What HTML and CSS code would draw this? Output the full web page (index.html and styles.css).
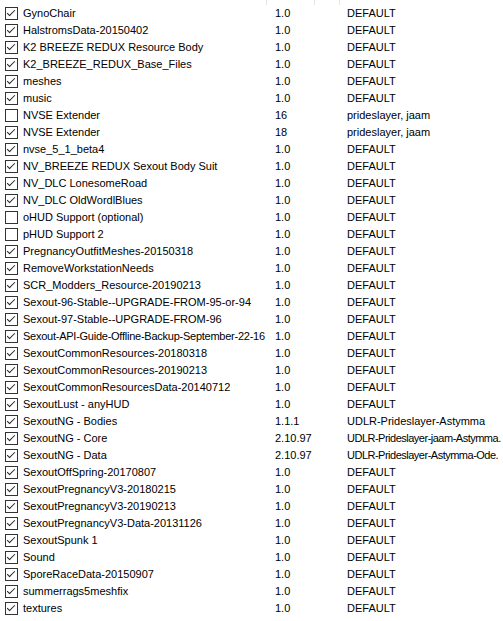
FILE: index.html
```html
<!DOCTYPE html>
<html lang="en">
<head>
    <meta charset="UTF-8">
    <title>Mod list</title>
    <link rel="stylesheet" href="styles.css">
</head>
<body>
    <div class="list">
        <div class="head"><span></span><span></span><span></span></div>
        <div class="row"><span class="name"><i class="chk on"></i>GynoChair</span><span class="ver">1.0</span><span class="auth">DEFAULT</span></div>
        <div class="row"><span class="name"><i class="chk on"></i>HalstromsData-20150402</span><span class="ver">1.0</span><span class="auth">DEFAULT</span></div>
        <div class="row"><span class="name"><i class="chk on"></i>K2 BREEZE REDUX Resource Body</span><span class="ver">1.0</span><span class="auth">DEFAULT</span></div>
        <div class="row"><span class="name"><i class="chk on"></i>K2_BREEZE_REDUX_Base_Files</span><span class="ver">1.0</span><span class="auth">DEFAULT</span></div>
        <div class="row"><span class="name"><i class="chk on"></i>meshes</span><span class="ver">1.0</span><span class="auth">DEFAULT</span></div>
        <div class="row"><span class="name"><i class="chk on"></i>music</span><span class="ver">1.0</span><span class="auth">DEFAULT</span></div>
        <div class="row"><span class="name"><i class="chk"></i>NVSE Extender</span><span class="ver">16</span><span class="auth">prideslayer, jaam</span></div>
        <div class="row"><span class="name"><i class="chk on"></i>NVSE Extender</span><span class="ver">18</span><span class="auth">prideslayer, jaam</span></div>
        <div class="row"><span class="name"><i class="chk on"></i>nvse_5_1_beta4</span><span class="ver">1.0</span><span class="auth">DEFAULT</span></div>
        <div class="row"><span class="name"><i class="chk on"></i>NV_BREEZE REDUX Sexout Body Suit</span><span class="ver">1.0</span><span class="auth">DEFAULT</span></div>
        <div class="row"><span class="name"><i class="chk on"></i>NV_DLC LonesomeRoad</span><span class="ver">1.0</span><span class="auth">DEFAULT</span></div>
        <div class="row"><span class="name"><i class="chk on"></i>NV_DLC OldWordlBlues</span><span class="ver">1.0</span><span class="auth">DEFAULT</span></div>
        <div class="row"><span class="name"><i class="chk"></i>oHUD Support (optional)</span><span class="ver">1.0</span><span class="auth">DEFAULT</span></div>
        <div class="row"><span class="name"><i class="chk"></i>pHUD Support 2</span><span class="ver">1.0</span><span class="auth">DEFAULT</span></div>
        <div class="row"><span class="name"><i class="chk on"></i>PregnancyOutfitMeshes-20150318</span><span class="ver">1.0</span><span class="auth">DEFAULT</span></div>
        <div class="row"><span class="name"><i class="chk on"></i>RemoveWorkstationNeeds</span><span class="ver">1.0</span><span class="auth">DEFAULT</span></div>
        <div class="row"><span class="name"><i class="chk on"></i>SCR_Modders_Resource-20190213</span><span class="ver">1.0</span><span class="auth">DEFAULT</span></div>
        <div class="row"><span class="name"><i class="chk on"></i>Sexout-96-Stable--UPGRADE-FROM-95-or-94</span><span class="ver">1.0</span><span class="auth">DEFAULT</span></div>
        <div class="row"><span class="name"><i class="chk on"></i>Sexout-97-Stable--UPGRADE-FROM-96</span><span class="ver">1.0</span><span class="auth">DEFAULT</span></div>
        <div class="row"><span class="name tight"><i class="chk on"></i>Sexout-API-Guide-Offline-Backup-September-22-16</span><span class="ver">1.0</span><span class="auth">DEFAULT</span></div>
        <div class="row"><span class="name"><i class="chk on"></i>SexoutCommonResources-20180318</span><span class="ver">1.0</span><span class="auth">DEFAULT</span></div>
        <div class="row"><span class="name"><i class="chk on"></i>SexoutCommonResources-20190213</span><span class="ver">1.0</span><span class="auth">DEFAULT</span></div>
        <div class="row"><span class="name"><i class="chk on"></i>SexoutCommonResourcesData-20140712</span><span class="ver">1.0</span><span class="auth">DEFAULT</span></div>
        <div class="row"><span class="name"><i class="chk on"></i>SexoutLust - anyHUD</span><span class="ver">1.0</span><span class="auth">DEFAULT</span></div>
        <div class="row"><span class="name"><i class="chk on"></i>SexoutNG - Bodies</span><span class="ver">1.1.1</span><span class="auth">UDLR-Prideslayer-Astymma</span></div>
        <div class="row"><span class="name"><i class="chk on"></i>SexoutNG - Core</span><span class="ver">2.10.97</span><span class="auth tighter">UDLR-Prideslayer-jaam-Astymma.</span></div>
        <div class="row"><span class="name"><i class="chk on"></i>SexoutNG - Data</span><span class="ver">2.10.97</span><span class="auth tighter">UDLR-Prideslayer-Astymma-Ode.</span></div>
        <div class="row"><span class="name"><i class="chk on"></i>SexoutOffSpring-20170807</span><span class="ver">1.0</span><span class="auth">DEFAULT</span></div>
        <div class="row"><span class="name"><i class="chk on"></i>SexoutPregnancyV3-20180215</span><span class="ver">1.0</span><span class="auth">DEFAULT</span></div>
        <div class="row"><span class="name"><i class="chk on"></i>SexoutPregnancyV3-20190213</span><span class="ver">1.0</span><span class="auth">DEFAULT</span></div>
        <div class="row"><span class="name"><i class="chk on"></i>SexoutPregnancyV3-Data-20131126</span><span class="ver">1.0</span><span class="auth">DEFAULT</span></div>
        <div class="row"><span class="name"><i class="chk on"></i>SexoutSpunk 1</span><span class="ver">1.0</span><span class="auth">DEFAULT</span></div>
        <div class="row"><span class="name"><i class="chk on"></i>Sound</span><span class="ver">1.0</span><span class="auth">DEFAULT</span></div>
        <div class="row"><span class="name"><i class="chk on"></i>SporeRaceData-20150907</span><span class="ver">1.0</span><span class="auth">DEFAULT</span></div>
        <div class="row"><span class="name"><i class="chk on"></i>summerrags5meshfix</span><span class="ver">1.0</span><span class="auth">DEFAULT</span></div>
        <div class="row"><span class="name"><i class="chk on"></i>textures</span><span class="ver">1.0</span><span class="auth">DEFAULT</span></div>
    </div>
</body>
</html>
```

FILE: styles.css
```css
body { margin: 0; background: #fff; font-family: "Liberation Sans", Arial, sans-serif; font-size: 11px; color: #000; }
.list { width: 503px; height: 621px; overflow: hidden; }
.head { display: grid; grid-template-columns: 267px 48px 25px 1fr; height: 5px; }
.head span { border-right: 1px solid #e5e5e5; }
.row { display: grid; grid-template-columns: 267px 73px 1fr; height: 17px; line-height: 17px; white-space: nowrap; }
.row span { overflow: hidden; }
.name { display: flex; align-items: center; }
.ver { padding-left: 8px; }
.auth { padding-left: 7px; }
.tight { letter-spacing: -0.25px; }
.tighter { letter-spacing: -0.5px; }
.chk { position: relative; display: inline-block; width: 11px; height: 11px; border: 1px solid #333; margin: 0 5px 0 5px; flex: none; }
.chk.on::after { content: ""; position: absolute; top: 2px; left: 1px; width: 7px; height: 3px; border-left: 1px solid #222; border-bottom: 1px solid #222; transform: rotate(-45deg); }
```
